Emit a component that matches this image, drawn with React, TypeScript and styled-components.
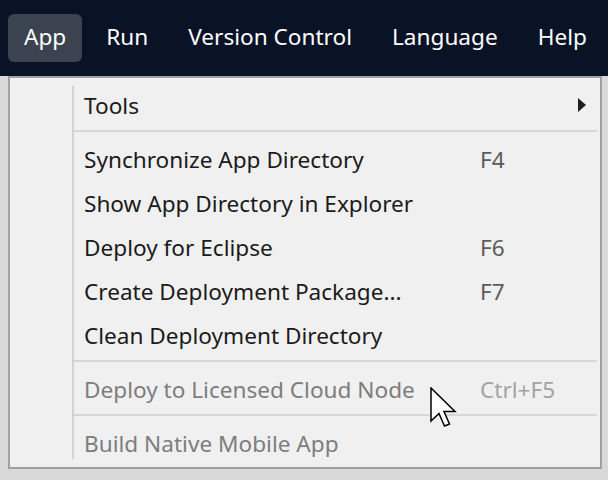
import React from 'react';
import styled, { createGlobalStyle } from 'styled-components';

type MenuEntry =
    | { kind: 'item'; label: string; shortcut?: string; disabled?: boolean; submenu?: boolean }
    | { kind: 'separator' };

const GlobalStyle = createGlobalStyle`
    body {
        margin: 0;
        background-color: #d9d9d9;
        font-family: "Noto Sans", "Open Sans", sans-serif;
    }
`

const Page = styled.div`
    width: 608px;
    height: 480px;
    overflow: hidden;
    position: relative;
`

const TopBar = styled.div`
    height: 76px;
    background-color: #0a1226;
    display: flex;
    align-items: center;
    padding-left: 8px;
    gap: 8px;
`

const TopButton = styled.div<{ active?: boolean }>`
    height: 48px;
    padding: 0 16px 3px;
    box-sizing: border-box;
    display: flex;
    align-items: center;
    border-radius: 6px;
    color: #ffffff;
    font-size: 22.6px;
    background-color: ${({ active }) => (active ? '#3b4351' : 'transparent')};
`

const Dropdown = styled.div`
    margin-left: 8px;
    width: 590px;
    height: 389px;
    border: 2px solid #a0a0a0;
    background-color: #f0f0f0;
    display: flex;
`

const Gutter = styled.div`
    width: 62px;
    margin: 8px 0;
    border-right: 2px solid #d3d3d3;
`

const Items = styled.div`
    flex: 1;
    padding: 6px 3px 1px 0;
    display: flex;
    flex-direction: column;
`

const Row = styled.div<{ disabled?: boolean }>`
    height: 44px;
    box-sizing: border-box;
    padding: 0 0 2px 10px;
    display: flex;
    align-items: center;
    font-size: 22.6px;
    color: ${({ disabled }) => (disabled ? '#7d7d7d' : '#1b1b1b')};
`

const Label = styled.span`
    width: 396px;
    white-space: nowrap;
`

const Shortcut = styled.span<{ disabled?: boolean }>`
    flex: 1;
    color: ${({ disabled }) => (disabled ? '#a3a3a3' : '#5c5c5c')};
`

const SubArrow = styled.svg`
    margin: 0 11px 0 0;
`

const Separator = styled.div`
    height: 10px;
    &::before {
        content: '';
        display: block;
        margin-top: 2px;
        height: 2px;
        background-color: #d7d7d7;
    }
`

const Cursor = styled.svg`
    position: absolute;
    left: 430px;
    top: 387px;
`

const topItems = ['App', 'Run', 'Version Control', 'Language', 'Help'];

const entries: MenuEntry[] = [
    { kind: 'item', label: 'Tools', submenu: true },
    { kind: 'separator' },
    { kind: 'item', label: 'Synchronize App Directory', shortcut: 'F4' },
    { kind: 'item', label: 'Show App Directory in Explorer' },
    { kind: 'item', label: 'Deploy for Eclipse', shortcut: 'F6' },
    { kind: 'item', label: 'Create Deployment Package...', shortcut: 'F7' },
    { kind: 'item', label: 'Clean Deployment Directory' },
    { kind: 'separator' },
    { kind: 'item', label: 'Deploy to Licensed Cloud Node', shortcut: 'Ctrl+F5', disabled: true },
    { kind: 'separator' },
    { kind: 'item', label: 'Build Native Mobile App', disabled: true },
];

const App: React.FC = () => {
    return (
        <Page>
            <GlobalStyle />
            <TopBar>
                {topItems.map((name, i) => (
                    <TopButton key={name} active={i === 0}>{name}</TopButton>
                ))}
            </TopBar>
            <Dropdown>
                <Gutter />
                <Items>
                    {entries.map((entry, i) =>
                        entry.kind === 'separator' ? (
                            <Separator key={i} />
                        ) : (
                            <Row key={i} disabled={entry.disabled}>
                                <Label>{entry.label}</Label>
                                <Shortcut disabled={entry.disabled}>{entry.shortcut}</Shortcut>
                                {entry.submenu && (
                                    <SubArrow width="8" height="14" viewBox="0 0 8 14">
                                        <polygon points="0,0 8,7 0,14" fill="#1e1e1e" />
                                    </SubArrow>
                                )}
                            </Row>
                        )
                    )}
                </Items>
            </Dropdown>
            <Cursor width="28" height="42" viewBox="0 0 28 42">
                <path
                    d="M1 1 L1 34 L9 26.5 L14.5 39 L19.5 37 L14 24.5 L25 24.5 Z"
                    fill="#ffffff"
                    stroke="#000000"
                    strokeWidth="1.5"
                    strokeLinejoin="miter"
                />
            </Cursor>
        </Page>
    )
}

export default App;
